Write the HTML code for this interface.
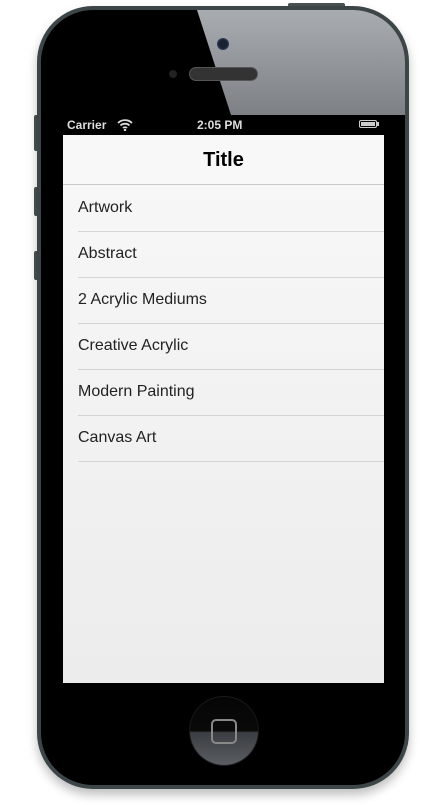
<!DOCTYPE html>
<html><head><style>
body{margin:0;width:448px;height:805px;background:#fff;position:relative;overflow:hidden;font-family:"Liberation Sans",sans-serif}
.abs{position:absolute}
.row{position:absolute;left:78px;right:0;height:46px;border-bottom:1px solid #d4d4d4;font-size:16px;color:#222;line-height:46px}
</style></head><body>
<div class="abs" style="left:288px;top:3px;width:57px;height:6px;background:#4a5254;border-radius:2px"></div>
<div class="abs" style="left:34px;top:115px;width:6px;height:36px;background:#4a5254;border-radius:2px"></div>
<div class="abs" style="left:34px;top:187px;width:6px;height:29px;background:#4a5254;border-radius:2px"></div>
<div class="abs" style="left:34px;top:251px;width:6px;height:29px;background:#4a5254;border-radius:2px"></div>
<div class="abs" style="left:37px;top:6px;width:372px;height:783px;border-radius:56px;background:#3c4648;box-shadow:0 6px 10px rgba(0,0,0,.25)"></div>
<div class="abs" style="left:41px;top:10px;width:364px;height:775px;border-radius:52px;background:#000;overflow:hidden">
 <div class="abs" style="left:0;top:0;width:364px;height:105px;background:linear-gradient(180deg,#a9acb0,#7d8185);clip-path:polygon(156px 0,364px 0,364px 105px,190px 105px)"></div>
</div>
<div class="abs" style="left:217px;top:38px;width:12px;height:12px;border-radius:50%;background:#1a2230;box-shadow:inset 0 0 2px #5070a0"></div>
<div class="abs" style="left:169px;top:70px;width:8px;height:8px;border-radius:50%;background:#222"></div>
<div class="abs" style="left:189px;top:67px;width:69px;height:14px;border-radius:7px;background:#333;border:1px solid #555;box-sizing:border-box"></div>
<div class="abs" style="left:63px;top:115px;width:321px;height:20px;background:#000;color:#ddd;font-size:12px;font-weight:bold;line-height:20px">
 <span class="abs" style="left:4px">Carrier</span>
 <svg class="abs" style="left:54px;top:4px" width="16" height="12" viewBox="0 0 16 12"><path d="M1 4a10 10 0 0 1 14 0M3.5 6.5a6.5 6.5 0 0 1 9 0M6 9a3 3 0 0 1 4 0" stroke="#ddd" stroke-width="1.8" fill="none"/><circle cx="8" cy="11" r="1.2" fill="#ddd"/></svg>
 <span class="abs" style="left:134px">2:05 PM</span>
 <div class="abs" style="left:296px;top:5px;width:18px;height:8px;border:1px solid #ccc;border-radius:2px;box-sizing:border-box;background:#ccc;box-shadow:inset 0 0 0 1px #000"></div>
 <div class="abs" style="left:314px;top:7px;width:2px;height:4px;background:#ccc"></div>
</div>
<div class="abs" style="left:63px;top:135px;width:321px;height:548px;background:linear-gradient(#f8f8f8,#ececec);overflow:hidden">
 <div class="abs" style="left:0;top:0;width:321px;height:49px;border-bottom:1px solid #c8c8c8;background:#f8f8f8;text-align:center;font-weight:bold;font-size:20px;line-height:50px">Title</div>
 <div style="position:absolute;left:-63px;top:50px;width:384px">
  <div class="row" style="top:0;left:78px">Artwork</div>
  <div class="row" style="top:46px;left:78px">Abstract</div>
  <div class="row" style="top:92px;left:78px">2 Acrylic Mediums</div>
  <div class="row" style="top:138px;left:78px">Creative Acrylic</div>
  <div class="row" style="top:184px;left:78px">Modern Painting</div>
  <div class="row" style="top:230px;left:78px">Canvas Art</div>
 </div>
</div>
<div class="abs" style="left:190px;top:697px;width:68px;height:68px;border-radius:50%;background:linear-gradient(#050505 0%,#0a0a0a 50%,#3a3d42 52%,#5a5e63 100%);box-shadow:0 0 0 1px #1a1a1a"></div>
<div class="abs" style="left:211px;top:719px;width:26px;height:25px;border:2px solid #888;border-radius:5px;box-sizing:border-box"></div>
</body></html>
